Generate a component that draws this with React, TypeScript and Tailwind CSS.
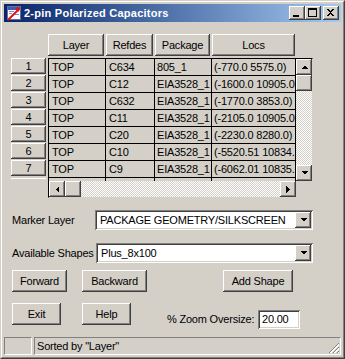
import React from 'react';

const raised =
  'bg-[#d4d0c8] shadow-[inset_-1px_-1px_0_#404040,inset_1px_1px_0_#ffffff,inset_-2px_-2px_0_#808080]';
const sunken =
  'shadow-[inset_1px_1px_0_#808080,inset_-1px_-1px_0_#ffffff,inset_2px_2px_0_#404040,inset_-2px_-2px_0_#d4d0c8]';
const track =
  'bg-[image:repeating-conic-gradient(#d4d0c8_0_25%,#ffffff_0_50%)] bg-[length:2px_2px]';

const rows = [
  ['TOP', 'C634', '805_1', '(-770.0 5575.0)'],
  ['TOP', 'C12', 'EIA3528_1', '(-1600.0 10905.0'],
  ['TOP', 'C632', 'EIA3528_1', '(-1770.0 3853.0)'],
  ['TOP', 'C11', 'EIA3528_1', '(-2105.0 10905.0'],
  ['TOP', 'C20', 'EIA3528_1', '(-2230.0 8280.0)'],
  ['TOP', 'C10', 'EIA3528_1', '(-5520.51 10834.'],
  ['TOP', 'C9', 'EIA3528_1', '(-6062.01 10835.'],
];

// little black triangle used by scroll/dropdown buttons
function Tri({ dir }: { dir: 'up' | 'down' | 'left' | 'right' }) {
  const pts = {
    up: '0,4 7,4 3.5,0.5',
    down: '0,0 7,0 3.5,3.5',
    left: '4,0 4,7 0.5,3.5',
    right: '0,0 0,7 3.5,3.5',
  }[dir];
  const vertical = dir === 'up' || dir === 'down';
  return (
    <svg width={vertical ? 7 : 4} height={vertical ? 4 : 7} shapeRendering="crispEdges">
      <polygon points={pts} fill="#000" />
    </svg>
  );
}

function ArrowBtn({ dir }: { dir: 'up' | 'down' | 'left' | 'right' }) {
  return (
    <div className={`w-[16px] h-[16px] shrink-0 flex items-center justify-center ${raised}`}>
      <Tri dir={dir} />
    </div>
  );
}

function Select({ value, width }: { value: string; width: string }) {
  return (
    <div className={`${width} h-[20px] bg-white flex items-center p-[2px] ${sunken}`}>
      <span className="flex-1 pl-[3px] whitespace-nowrap overflow-hidden">{value}</span>
      <ArrowBtn dir="down" />
    </div>
  );
}

function Btn({ label, width }: { label: string; width: string }) {
  return (
    <div className={`${width} h-[22px] flex items-center justify-center ${raised}`}>
      {label}
    </div>
  );
}

function TitleIcon() {
  return (
    <svg width="16" height="16" viewBox="0 0 16 16" shapeRendering="crispEdges">
      <rect x="1" y="1" width="13" height="13" fill="#ffffff" stroke="#6c6c9c" />
      <rect x="2" y="2" width="12" height="3" fill="#3a5bb8" />
      <rect x="3" y="6" width="5" height="1" fill="#8090c8" />
      <rect x="3" y="8" width="3" height="1" fill="#8090c8" />
      <rect x="9" y="9" width="4" height="1" fill="#8090c8" />
      <path d="M2 15 L12 5" stroke="#e01010" strokeWidth="2" shapeRendering="auto" />
      <polygon points="9,3 14,2 13,7" fill="#e01010" shapeRendering="auto" />
    </svg>
  );
}

function CapBtn({ kind }: { kind: 'min' | 'max' | 'close' }) {
  return (
    <div className={`w-[16px] h-[14px] ${raised}`}>
      <svg width="16" height="14" shapeRendering="crispEdges">
        {kind === 'min' && <rect x="4" y="9" width="6" height="2" fill="#000" />}
        {kind === 'max' && (
          <>
            <rect x="3.5" y="2.5" width="8" height="8" fill="none" stroke="#000" />
            <rect x="3" y="3" width="9" height="1" fill="#000" />
          </>
        )}
        {kind === 'close' && (
          <path
            d="M4 3h2v1h1v1h1V4h1V3h2v1h-1v1h-1v1h-1v1h1v1h1v1h1v1H9V9H8V8H7v1H6v1H4V9h1V8h1V7h1V6H6V5H5V4H4z"
            fill="#000"
          />
        )}
      </svg>
    </div>
  );
}

export default function App() {
  return (
    <div className="w-[345px] h-[359px] bg-[#d4d0c8] border border-t-[#d4d0c8] border-l-[#d4d0c8] border-r-[#404040] border-b-[#404040] font-['Liberation_Sans',Arial,sans-serif] text-[11px] tracking-[-0.2px] text-black leading-none">
      <div className="h-full border border-t-white border-l-white border-r-[#808080] border-b-[#808080] p-[2px] flex flex-col">
        {/* Title bar */}
        <div className="h-[18px] shrink-0 flex items-center bg-linear-to-r from-[#0a246a] to-[#a6caf0]">
          <div className="ml-[2px]">
            <TitleIcon />
          </div>
          <span className="ml-[2px] text-white font-bold text-[11px] tracking-[0.25px]">2-pin Polarized Capacitors</span>
          <div className="ml-auto mr-[2px] flex items-center">
            <CapBtn kind="min" />
            <CapBtn kind="max" />
            <div className="ml-[2px]">
              <CapBtn kind="close" />
            </div>
          </div>
        </div>

        {/* Client area */}
        <div className="flex-1 flex flex-col">
          {/* Column headers */}
          <div className="mt-[12px] ml-[44px] flex h-[22px]">
            <div className={`w-[56px] mr-[2px] flex items-center justify-center ${raised}`}>Layer</div>
            <div className={`w-[47px] mr-[2px] flex items-center justify-center ${raised}`}>Refdes</div>
            <div className={`w-[55px] mr-[2px] flex items-center justify-center ${raised}`}>Package</div>
            <div className={`w-[83px] flex items-center justify-center ${raised}`}>Locs</div>
          </div>

          {/* Grid */}
          <div className="mt-[2px] ml-[7px] flex">
            <div className="w-[35px] flex flex-col">
              {rows.map((_, i) => (
                <div key={i} className={`h-[16px] mb-[1px] flex items-center justify-center ${raised}`}>
                  {i + 1}
                </div>
              ))}
              <div className="h-[3px] mt-[1px] border-t border-t-white bg-[#d4d0c8]" />
            </div>

            <div className="ml-[2px] w-[265px] h-[140px] border border-t-black border-l-black border-r-[#d4d0c8] border-b-[#d4d0c8] flex flex-col">
              <div className="flex h-[122px]">
                <div className="w-[247px] overflow-hidden">
                  {[...rows, ['', '', '', '']].map((r, i) => (
                    <div key={i} className="flex h-[17px] border-b border-black">
                      <div className="w-[57px] border-r border-black pl-[3px] flex items-center whitespace-nowrap overflow-hidden">{r[0]}</div>
                      <div className="w-[49px] border-r border-black pl-[3px] flex items-center whitespace-nowrap overflow-hidden">{r[1]}</div>
                      <div className="w-[57px] border-r border-black pl-[2px] flex items-center whitespace-nowrap overflow-hidden">{r[2]}</div>
                      <div className="w-[84px] border-r border-black pl-[2px] flex items-center whitespace-nowrap overflow-hidden">{r[3]}</div>
                    </div>
                  ))}
                </div>
                <div className="w-[16px] flex flex-col">
                  <ArrowBtn dir="up" />
                  <div className={`h-[16px] ${raised}`} />
                  <div className={`flex-1 ${track}`} />
                  <ArrowBtn dir="down" />
                </div>
              </div>
              <div className="flex h-[16px]">
                <div className="w-[247px] flex">
                  <ArrowBtn dir="left" />
                  <div className={`w-[16px] ${raised}`} />
                  <div className={`flex-1 ${track}`} />
                  <ArrowBtn dir="right" />
                </div>
                <div className="w-[16px] bg-[#d4d0c8]" />
              </div>
            </div>
          </div>

          {/* Marker layer */}
          <div className="mt-[12px] flex items-center">
            <span className="w-[91px] pl-[8px]">Marker Layer</span>
            <Select value="PACKAGE GEOMETRY/SILKSCREEN" width="w-[218px]" />
          </div>

          {/* Available shapes */}
          <div className="mt-[13px] flex items-center">
            <span className="w-[92px] pl-[8px] whitespace-nowrap">Available Shapes</span>
            <Select value="Plus_8x100" width="w-[217px]" />
          </div>

          {/* Buttons */}
          <div className="mt-[7px] ml-[8px] flex">
            <Btn label="Forward" width="w-[55px]" />
            <div className="ml-[15px]">
              <Btn label="Backward" width="w-[65px]" />
            </div>
            <div className="ml-[76px]">
              <Btn label="Add Shape" width="w-[70px]" />
            </div>
          </div>

          <div className="mt-[11px] ml-[8px] flex items-start">
            <Btn label="Exit" width="w-[49px]" />
            <div className="ml-[21px]">
              <Btn label="Help" width="w-[49px]" />
            </div>
            <div className="ml-[36px] mt-[7px] flex items-center">
              <span className="w-[91px] whitespace-nowrap">% Zoom Oversize:</span>
              <div className={`w-[42px] h-[19px] bg-white flex items-center pl-[4px] ${sunken}`}>20.00</div>
            </div>
          </div>

          {/* Status bar */}
          <div className="mt-auto h-[18px] flex">
            <div className="w-[28px] border border-t-[#808080] border-l-[#808080] border-r-white border-b-white" />
            <div className="ml-[2px] flex-1 border border-t-[#808080] border-l-[#808080] border-r-white border-b-white flex items-center pl-[2px] relative">
              Sorted by "Layer"
              <svg className="absolute right-0 bottom-0" width="12" height="12" shapeRendering="crispEdges">
                <path d="M11 1 L1 11 M11 5 L5 11 M11 9 L9 11" stroke="#808080" strokeWidth="1.4" />
                <path d="M11 2.5 L2.5 11 M11 6.5 L6.5 11 M11 10.5 L10.5 11" stroke="#ffffff" strokeWidth="1" />
              </svg>
            </div>
          </div>
        </div>
      </div>
    </div>
  );
}
